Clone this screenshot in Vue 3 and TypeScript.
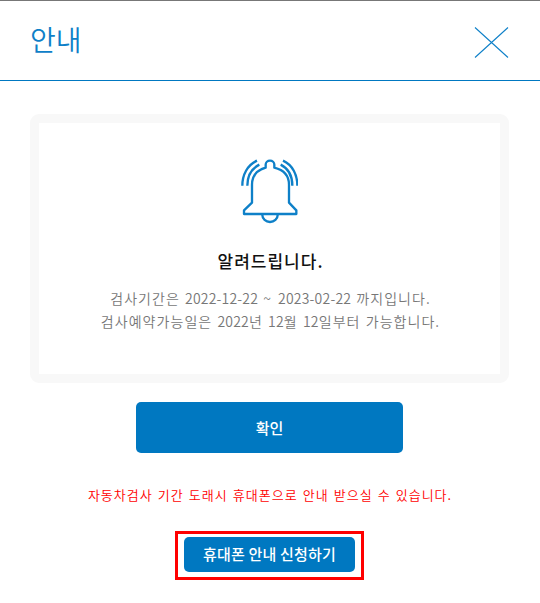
<script setup lang="ts">
interface Run {
  text: string
  kind: 'ko' | 'num' | 'tilde'
}

const title: string = '안내'
const heading: string = '알려드립니다.'
const lines: Run[][] = [
  [
    { text: '검사기간은 ', kind: 'ko' },
    { text: '2022-12-22', kind: 'num' },
    { text: ' ~ ', kind: 'tilde' },
    { text: '2023-02-22', kind: 'num' },
    { text: ' 까지입니다.', kind: 'ko' },
  ],
  [
    { text: '검사예약가능일은 ', kind: 'ko' },
    { text: '2022', kind: 'num' },
    { text: '년 ', kind: 'ko' },
    { text: '12', kind: 'num' },
    { text: '월 ', kind: 'ko' },
    { text: '12', kind: 'num' },
    { text: '일부터 가능합니다.', kind: 'ko' },
  ],
]
</script>

<template>
  <div class="popup">
    <header class="header">
      <h1 class="title">{{ title }}</h1>
      <button class="close" type="button" aria-label="닫기">
        <svg width="35" height="33" viewBox="0 0 35 33">
          <path d="M1 1.5 L34 31.5 M34 1.5 L1 31.5" />
        </svg>
      </button>
    </header>
    <main class="content">
      <section class="card">
        <svg class="bell" width="58" height="66" viewBox="30 24 174 198">
          <path d="M107 53 V44 A13 12 0 0 1 133 44 V53 C161 60 177 78 177 104 V158 L199 181 V192 H42 V181 L66 158 V104 C66 78 82 60 107 53Z" />
          <path d="M97 195 A23 21 0 0 0 143 195" />
          <path d="M37 107 C37 75 52 45 81 32 M52 107 C52 80 64 56 88 44" />
          <path d="M159 32 C188 45 202 75 202 107 M152 44 C176 56 187 80 187 107" />
        </svg>
        <h2 class="heading">{{ heading }}</h2>
        <p v-for="(line, i) in lines" :key="i" class="line"><span v-for="(run, j) in line" :key="j" :class="run.kind">{{ run.text }}</span></p>
      </section>
      <button class="confirm" type="button">확인</button>
      <p class="notice">자동차검사 기간 도래시 휴대폰으로 안내 받으실 수 있습니다.</p>
      <div class="highlight">
        <button class="apply" type="button">휴대폰 안내 신청하기</button>
      </div>
    </main>
  </div>
</template>

<style>
body {
  background: #fff;
}
</style>

<style scoped>
.popup {
  box-sizing: border-box;
  width: 540px;
  height: 603px;
  overflow: hidden;
  border-top: 1px solid #777;
  background: #fff;
  font-family: "Noto Sans CJK KR", "Noto Sans", sans-serif;
}
h1, h2, p {
  margin: 0;
  font-weight: 400;
  white-space: nowrap;
}
button {
  padding: 0;
  border: 0;
  font-family: inherit;
  white-space: nowrap;
}
.header {
  box-sizing: border-box;
  display: flex;
  justify-content: space-between;
  align-items: flex-start;
  height: 80px;
  padding: 25px 31px 0 30px;
  border-bottom: 1px solid #0078c1;
}
.title {
  color: #0e80c8;
  font-size: 28px;
  font-weight: 350;
  line-height: 27px;
}
.close {
  width: 35px;
  height: 33px;
  background: none;
}
.close svg, .bell {
  display: block;
  fill: none;
  stroke: #0e80c8;
}
.close svg {
  stroke-width: 1.1;
}
.bell {
  margin-right: 1px;
  stroke-width: 7;
  stroke-linejoin: round;
}
.content {
  display: flex;
  flex-direction: column;
  align-items: center;
  padding: 33px 31px 0 30px;
}
.card {
  box-sizing: border-box;
  display: flex;
  flex-direction: column;
  align-items: center;
  width: 479px;
  height: 269px;
  padding-top: 35px;
  border: 9px solid #f8f8f8;
  border-radius: 9px;
}
.heading {
  margin: 24px 0 13px;
  padding-left: 2px;
  color: #111;
  font-size: 17px;
  font-weight: 500;
  line-height: 26px;
  letter-spacing: 1px;
}
.line {
  padding-left: 2px;
  color: #777;
  font-size: 14px;
  font-weight: 350;
  line-height: 23px;
}
.ko {
  letter-spacing: 1.05px;
  word-spacing: 1px;
}
.num {
  letter-spacing: 0.2px;
}
.tilde {
  letter-spacing: 2px;
}
.confirm {
  width: 267px;
  height: 51px;
  margin-top: 19px;
  border-radius: 5px;
  background: #0078c1;
  color: #fff;
  font-size: 15px;
  font-weight: 500;
  line-height: 51px;
}
.notice {
  margin-top: 31px;
  padding-left: 1px;
  color: #f00;
  font-size: 13px;
  font-weight: 350;
  line-height: 22px;
  letter-spacing: 1px;
  word-spacing: 1.2px;
}
.highlight {
  box-sizing: border-box;
  width: 189px;
  height: 49px;
  margin-top: 25px;
  padding: 3px 6px;
  border: 3px solid #f00;
}
.apply {
  display: block;
  width: 171px;
  height: 35px;
  border-radius: 5px;
  background: #0078c1;
  color: #fff;
  font-size: 15px;
  font-weight: 500;
  line-height: 33px;
  padding-bottom: 2px;
  letter-spacing: 0.2px;
}
</style>
